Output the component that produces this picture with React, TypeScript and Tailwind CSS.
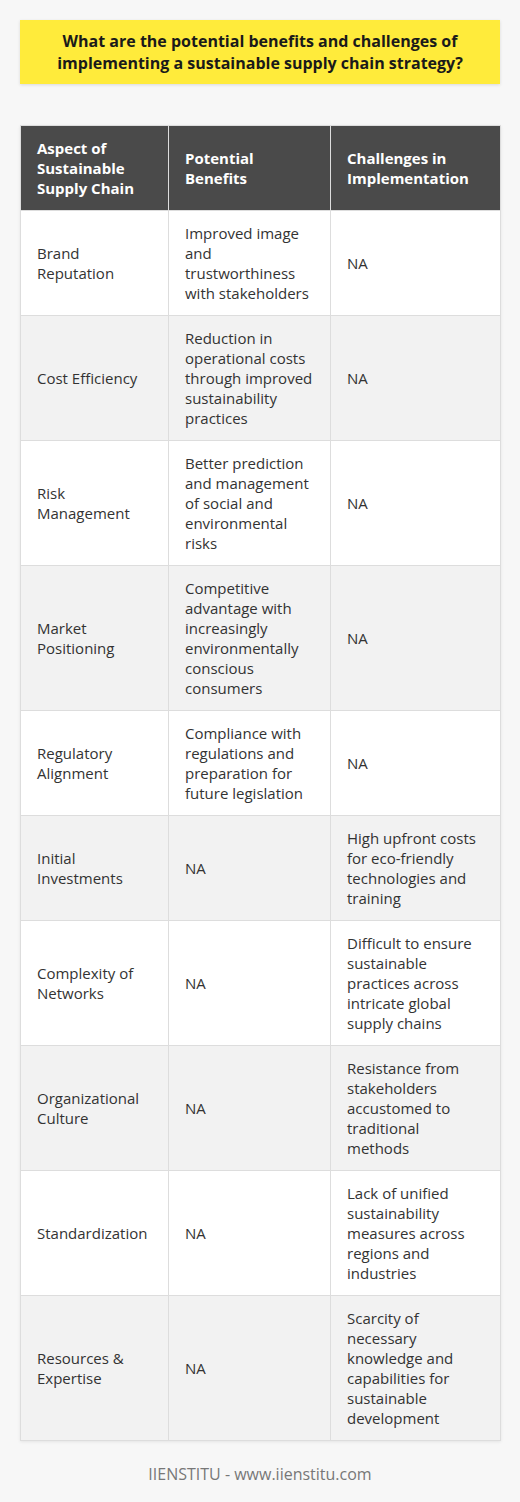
import React from "react";

const rows: [string, string, string][] = [
  ["Brand Reputation", "Improved image and trustworthiness with stakeholders", "NA"],
  ["Cost Efficiency", "Reduction in operational costs through improved sustainability practices", "NA"],
  ["Risk Management", "Better prediction and management of social and environmental risks", "NA"],
  ["Market Positioning", "Competitive advantage with increasingly environmentally conscious consumers", "NA"],
  ["Regulatory Alignment", "Compliance with regulations and preparation for future legislation", "NA"],
  ["Initial Investments", "NA", "High upfront costs for eco-friendly technologies and training"],
  ["Complexity of Networks", "NA", "Difficult to ensure sustainable practices across intricate global supply chains"],
  ["Organizational Culture", "NA", "Resistance from stakeholders accustomed to traditional methods"],
  ["Standardization", "NA", "Lack of unified sustainability measures across regions and industries"],
  ["Resources & Expertise", "NA", "Scarcity of necessary knowledge and capabilities for sustainable development"],
];

export default function App() {
  return (
    <div
      className="w-[520px] min-h-[1502px] bg-[#f7f7f7] px-[20px] pt-[20px]"
      style={{ fontFamily: '"Open Sans", sans-serif' }}
    >
      <div className="bg-[#ffeb3b] py-[10px] px-4 text-center text-[16px] leading-[22px] font-bold text-[#1a1a1a] shadow-[0_1px_3px_rgba(0,0,0,0.12)]">
        What are the potential benefits and challenges of implementing a sustainable supply chain strategy?
      </div>
      <table className="mt-[41px] w-[480px] table-fixed border-collapse shadow-[0_1px_3px_rgba(0,0,0,0.08)]">
        <colgroup>
          <col className="w-[148px]" />
          <col className="w-[162px]" />
          <col className="w-[170px]" />
        </colgroup>
        <thead>
          <tr className="bg-[#4a4a4a] text-white">
            <th className="border border-[#dddddd] px-4 py-3 text-left align-middle text-[15px] leading-[20px] font-bold">
              Aspect of Sustainable Supply Chain
            </th>
            <th className="border border-[#dddddd] px-4 py-3 text-left align-middle text-[15px] leading-[20px] font-bold">
              Potential Benefits
            </th>
            <th className="border border-[#dddddd] px-4 py-3 text-left align-middle text-[15px] leading-[20px] font-bold">
              Challenges in Implementation
            </th>
          </tr>
        </thead>
        <tbody>
          {rows.map((r, i) => (
            <tr key={i} className={i % 2 === 0 ? "bg-white" : "bg-[#f2f2f2]"}>
              {r.map((c, j) => (
                <td
                  key={j}
                  className="border border-[#dddddd] px-4 py-3 text-left align-middle text-[15px] leading-[20px] text-[#333333]"
                >
                  {c}
                </td>
              ))}
            </tr>
          ))}
        </tbody>
      </table>
      <div className="mt-[22px] text-center text-[16px] leading-[22px] text-[#777777]">
        IIENSTITU - www.iienstitu.com
      </div>
    </div>
  );
}
